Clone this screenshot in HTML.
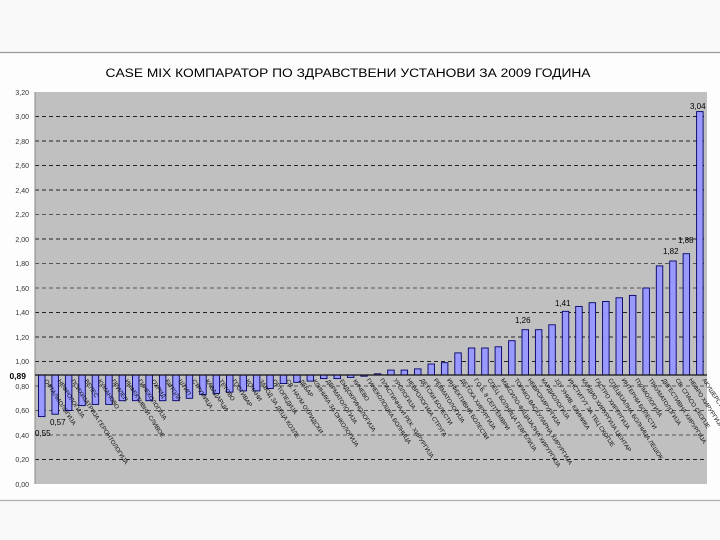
<!DOCTYPE html>
<html><head><meta charset="utf-8"><style>
html,body{margin:0;padding:0;background:#f9f9f9;}
svg{display:block;font-family:"Liberation Sans",sans-serif;}
</style></head><body>
<svg width="720" height="540" viewBox="0 0 720 540" xmlns="http://www.w3.org/2000/svg">
<rect x="0" y="0" width="720" height="540" fill="#f9f9f9"/>
<rect x="0" y="53" width="720" height="447" fill="#fdfdfd"/>
<line x1="0" y1="52.5" x2="720" y2="52.5" stroke="#9a9a9a" stroke-width="1.2"/>
<line x1="0" y1="500.5" x2="720" y2="500.5" stroke="#b0b0b0" stroke-width="1.2"/>
<text x="348" y="77" font-size="11.5" text-anchor="middle" fill="#000" textLength="485" lengthAdjust="spacingAndGlyphs">CASE MIX  КОМПАРАТОР ПО ЗДРАВСТВЕНИ УСТАНОВИ ЗА  2009 ГОДИНА</text>
<rect x="35" y="92" width="672" height="392" fill="#c0c0c0"/>
<g stroke="#222" stroke-width="1" stroke-dasharray="4,3">
<line x1="35" x2="707" y1="116.5" y2="116.5"/><line x1="35" x2="707" y1="141" y2="141"/>
<line x1="35" x2="707" y1="165.5" y2="165.5"/><line x1="35" x2="707" y1="190" y2="190"/>
<line x1="35" x2="707" y1="214.5" y2="214.5" stroke="#555"/><line x1="35" x2="707" y1="239" y2="239"/>
<line x1="35" x2="707" y1="263.5" y2="263.5" stroke="#555"/><line x1="35" x2="707" y1="288" y2="288" stroke="#555"/>
<line x1="35" x2="707" y1="312.5" y2="312.5"/><line x1="35" x2="707" y1="337" y2="337"/>
<line x1="35" x2="707" y1="361.5" y2="361.5"/><line x1="35" x2="707" y1="386" y2="386" stroke="#555"/>
<line x1="35" x2="707" y1="410.5" y2="410.5" stroke="#555"/><line x1="35" x2="707" y1="435" y2="435" stroke="#555"/>
<line x1="35" x2="707" y1="459.5" y2="459.5"/>
</g>
<line x1="35" x2="35" y1="92" y2="484" stroke="#888"/>
<g font-size="7" fill="#333" text-anchor="end">
<text x="29" y="95">3,20</text><text x="29" y="119">3,00</text><text x="29" y="144">2,80</text>
<text x="29" y="168">2,60</text><text x="29" y="193">2,40</text><text x="29" y="217">2,20</text>
<text x="29" y="242">2,00</text><text x="29" y="266">1,80</text><text x="29" y="291">1,60</text>
<text x="29" y="315">1,40</text><text x="29" y="340">1,20</text><text x="29" y="364">1,00</text>
<text x="29" y="389">0,80</text><text x="29" y="413">0,60</text><text x="29" y="438">0,40</text>
<text x="29" y="462">0,20</text><text x="29" y="487">0,00</text>
</g>
<text x="26" y="379" font-size="8.5" font-weight="bold" text-anchor="end" fill="#000">0,89</text>
<g fill="#9999ff" stroke="#000066" stroke-width="0.9">
<rect x="38.5" y="375" width="6.5" height="41.6"/>
<rect x="51.9" y="375" width="6.5" height="39.2"/>
<rect x="65.4" y="375" width="6.5" height="35.5"/>
<rect x="78.8" y="375" width="6.5" height="30.6"/>
<rect x="92.2" y="375" width="6.5" height="29.4"/>
<rect x="105.7" y="375" width="6.5" height="29.4"/>
<rect x="119.1" y="375" width="6.5" height="25.7"/>
<rect x="132.5" y="375" width="6.5" height="25.7"/>
<rect x="145.9" y="375" width="6.5" height="25.7"/>
<rect x="159.4" y="375" width="6.5" height="25.7"/>
<rect x="172.8" y="375" width="6.5" height="25.7"/>
<rect x="186.2" y="375" width="6.5" height="23.3"/>
<rect x="199.7" y="375" width="6.5" height="19.6"/>
<rect x="213.1" y="375" width="6.5" height="18.4"/>
<rect x="226.5" y="375" width="6.5" height="17.1"/>
<rect x="240.0" y="375" width="6.5" height="15.9"/>
<rect x="253.4" y="375" width="6.5" height="15.9"/>
<rect x="266.8" y="375" width="6.5" height="13.5"/>
<rect x="280.2" y="375" width="6.5" height="8.5"/>
<rect x="293.7" y="375" width="6.5" height="7.3"/>
<rect x="307.1" y="375" width="6.5" height="6.1"/>
<rect x="320.5" y="375" width="6.5" height="3.6"/>
<rect x="334.0" y="375" width="6.5" height="3.6"/>
<rect x="347.4" y="375" width="6.5" height="2.4"/>
<rect x="360.8" y="375" width="6.5" height="1.2"/>
<rect x="374.3" y="373.8" width="6.5" height="1.2"/>
<rect x="387.7" y="370.1" width="6.5" height="4.9"/>
<rect x="401.1" y="370.1" width="6.5" height="4.9"/>
<rect x="414.5" y="368.9" width="6.5" height="6.1"/>
<rect x="428.0" y="364.0" width="6.5" height="11"/>
<rect x="441.4" y="362.7" width="6.5" height="12.3"/>
<rect x="454.8" y="352.9" width="6.5" height="22.1"/>
<rect x="468.3" y="348.0" width="6.5" height="27"/>
<rect x="481.7" y="348.0" width="6.5" height="27"/>
<rect x="495.1" y="346.8" width="6.5" height="28.2"/>
<rect x="508.6" y="340.7" width="6.5" height="34.3"/>
<rect x="522.0" y="329.7" width="6.5" height="45.3"/>
<rect x="535.4" y="329.7" width="6.5" height="45.3"/>
<rect x="548.8" y="324.8" width="6.5" height="50.2"/>
<rect x="562.3" y="311.3" width="6.5" height="63.7"/>
<rect x="575.7" y="306.4" width="6.5" height="68.6"/>
<rect x="589.1" y="302.7" width="6.5" height="72.3"/>
<rect x="602.6" y="301.5" width="6.5" height="73.5"/>
<rect x="616.0" y="297.8" width="6.5" height="77.2"/>
<rect x="629.4" y="295.4" width="6.5" height="79.6"/>
<rect x="642.9" y="288.0" width="6.5" height="87"/>
<rect x="656.3" y="265.9" width="6.5" height="109.1"/>
<rect x="669.7" y="261.0" width="6.5" height="114"/>
<rect x="683.1" y="253.7" width="6.5" height="121.3"/>
<rect x="696.6" y="111.6" width="6.5" height="263.4"/>
</g>
<line x1="35" x2="707" y1="375" y2="375" stroke="#111" stroke-width="1.2"/>
<g font-size="8" fill="#000">
<text x="35" y="436">0,55</text><text x="50" y="425">0,57</text>
<text x="515" y="323">1,26</text><text x="555" y="306">1,41</text>
<text x="663" y="254">1,82</text><text x="678" y="243">1,88</text>
<text x="690" y="109">3,04</text>
</g>
<g font-size="6" fill="#111">
<text transform="translate(44,381) rotate(57)">ОФТАЛМОЛОГИЈА</text>
<text transform="translate(57.4,381) rotate(57)">НЕФРОЛОГИЈА</text>
<text transform="translate(70.9,381) rotate(57)">ПСИХИЈАТРИЈА ГЕРОНТОЛОГИЈА</text>
<text transform="translate(84.3,381) rotate(57)">ВЕЛЕС</text>
<text transform="translate(97.7,381) rotate(57)">КУМАНОВО</text>
<text transform="translate(111.2,381) rotate(57)">ПРИЛЕП</text>
<text transform="translate(124.6,381) rotate(57)">ИНФЕКТИВНИ СЛИВОЕ</text>
<text transform="translate(138,381) rotate(57)">ГИНЕКОЛОГИЈА</text>
<text transform="translate(151.4,381) rotate(57)">ОХРИД</text>
<text transform="translate(164.9,381) rotate(57)">БИТОЛА</text>
<text transform="translate(178.3,381) rotate(57)">ШТИП</text>
<text transform="translate(191.7,381) rotate(57)">СТРУМИЦА</text>
<text transform="translate(205.2,381) rotate(57)">КАВАДАРЦИ</text>
<text transform="translate(218.6,381) rotate(57)">ТЕТОВО</text>
<text transform="translate(232,381) rotate(57)">ГОСТИВАР</text>
<text transform="translate(245.5,381) rotate(57)">КОЧАНИ</text>
<text transform="translate(258.9,381) rotate(57)">ЗАВОД ЗА ДЕЦА КОЗЛЕ</text>
<text transform="translate(272.3,381) rotate(57)">ОРТОПЕДИЈА</text>
<text transform="translate(285.7,381) rotate(57)">СВ. НАУМ ОХРИДСКИ</text>
<text transform="translate(299.2,381) rotate(57)">ДЕБАР</text>
<text transform="translate(312.6,381) rotate(57)">КЛИНИКА ЗА ОНКОЛОГИЈА</text>
<text transform="translate(326,381) rotate(57)">ДЕРМАТОЛОГИЈА</text>
<text transform="translate(339.5,381) rotate(57)">ЕНДОКРИНОЛОГИЈА</text>
<text transform="translate(352.9,381) rotate(57)">КИЧЕВО</text>
<text transform="translate(366.3,380) rotate(57)">ГИНЕКОЛОШКА БОЛНИЦА</text>
<text transform="translate(379.8,380) rotate(57)">ПЛАСТИЧНА И РЕК. ХИРУРГИЈА</text>
<text transform="translate(393.2,380) rotate(57)">УРОЛОГИЈА</text>
<text transform="translate(406.6,380) rotate(57)">НЕВРОЛОГИЈА СТРУГА</text>
<text transform="translate(420,380) rotate(57)">ДЕТСКИ БОЛЕСТИ</text>
<text transform="translate(433.5,380) rotate(57)">РЕВМАТОЛОГИЈА</text>
<text transform="translate(446.9,380) rotate(57)">ИНФЕКТИВНИ БОЛЕСТИ</text>
<text transform="translate(460.3,380) rotate(57)">ДЕТСКА ХИРУРГИЈА</text>
<text transform="translate(473.8,380) rotate(57)">Г.О.Б. 8 СЕПТЕМВРИ</text>
<text transform="translate(487.2,380) rotate(57)">СПЕЦ. БОЛНИЦА ГЕВГЕЛИЈА</text>
<text transform="translate(500.6,380) rotate(57)">МАКСИЛО-ФАЦИЈАЛНА ХИРУРГИЈА</text>
<text transform="translate(514.1,380) rotate(57)">ТОРАКО-ВАСКУЛАРНА ХИРУРГИЈА</text>
<text transform="translate(527.5,380) rotate(57)">НЕВРОХИРУРГИЈА</text>
<text transform="translate(540.9,380) rotate(57)">КАРДИОЛОГИЈА</text>
<text transform="translate(554.3,380) rotate(57)">ЈЗУ УНИВ. КЛИНИКА</text>
<text transform="translate(567.8,380) rotate(57)">ИНСТИТУТ ЗА ТБЦ СКОПЈЕ</text>
<text transform="translate(581.2,380) rotate(57)">КАРДИО ХИРУРГИЈА ЦЕНТАР</text>
<text transform="translate(594.6,380) rotate(57)">ГАСТРО ХИРУРГИЈА</text>
<text transform="translate(608.1,380) rotate(57)">СПЕЦИЈАЛНА БОЛНИЦА ЛЕШОК</text>
<text transform="translate(621.5,380) rotate(57)">ИНТЕРНИ БОЛЕСТИ</text>
<text transform="translate(634.9,380) rotate(57)">ПУЛМОЛОГИЈА</text>
<text transform="translate(648.4,380) rotate(57)">ТРАУМАТОЛОГИЈА</text>
<text transform="translate(661.8,380) rotate(57)">ДИГЕСТИВНА ХИРУРГИЈА</text>
<text transform="translate(675.2,380) rotate(57)">СВ. СПАСО СКОПЈЕ</text>
<text transform="translate(688.6,380) rotate(57)">НЕФРО ХИРУРГИЈА</text>
<text transform="translate(702.1,380) rotate(57)">АКУШЕРСТВО</text>
</g>
</svg>
</body></html>
